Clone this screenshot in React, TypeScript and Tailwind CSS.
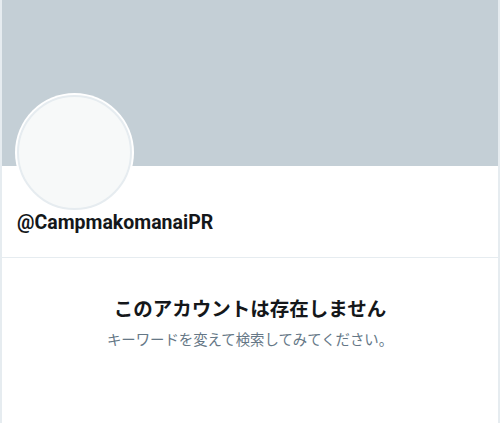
export default function App() {
  return (
    <div
      className="w-[500px] h-[423px] bg-white overflow-hidden flex flex-col border-l-2 border-r-2 border-[#e6ecf0]"
      style={{ fontFamily: 'Roboto, "Noto Sans CJK JP", sans-serif' }}
    >
      <div className="h-[166px] bg-[#c4cfd6] shrink-0" />
      <div className="relative h-[92px] shrink-0 border-b border-[#e6ecf0] px-[15px]">
        <div className="absolute left-[15px] top-[-71px] w-[115px] h-[115px] rounded-full bg-[#f7f9f9] border-[2px] border-[#e6ecf0] ring-2 ring-white" />
        <div className="pt-[45px] text-[19.5px] font-bold text-[#14171a] leading-[24px]">@CampmakomanaiPR</div>
      </div>
      <div className="flex flex-col items-center pt-[38px]">
        <div className="text-[19.5px] font-bold text-[#14171a] leading-[28px]">このアカウントは存在しません</div>
        <div className="mt-[7px] text-[14.4px] text-[#657786] leading-[20px]">キーワードを変えて検索してみてください。</div>
      </div>
    </div>
  );
}
